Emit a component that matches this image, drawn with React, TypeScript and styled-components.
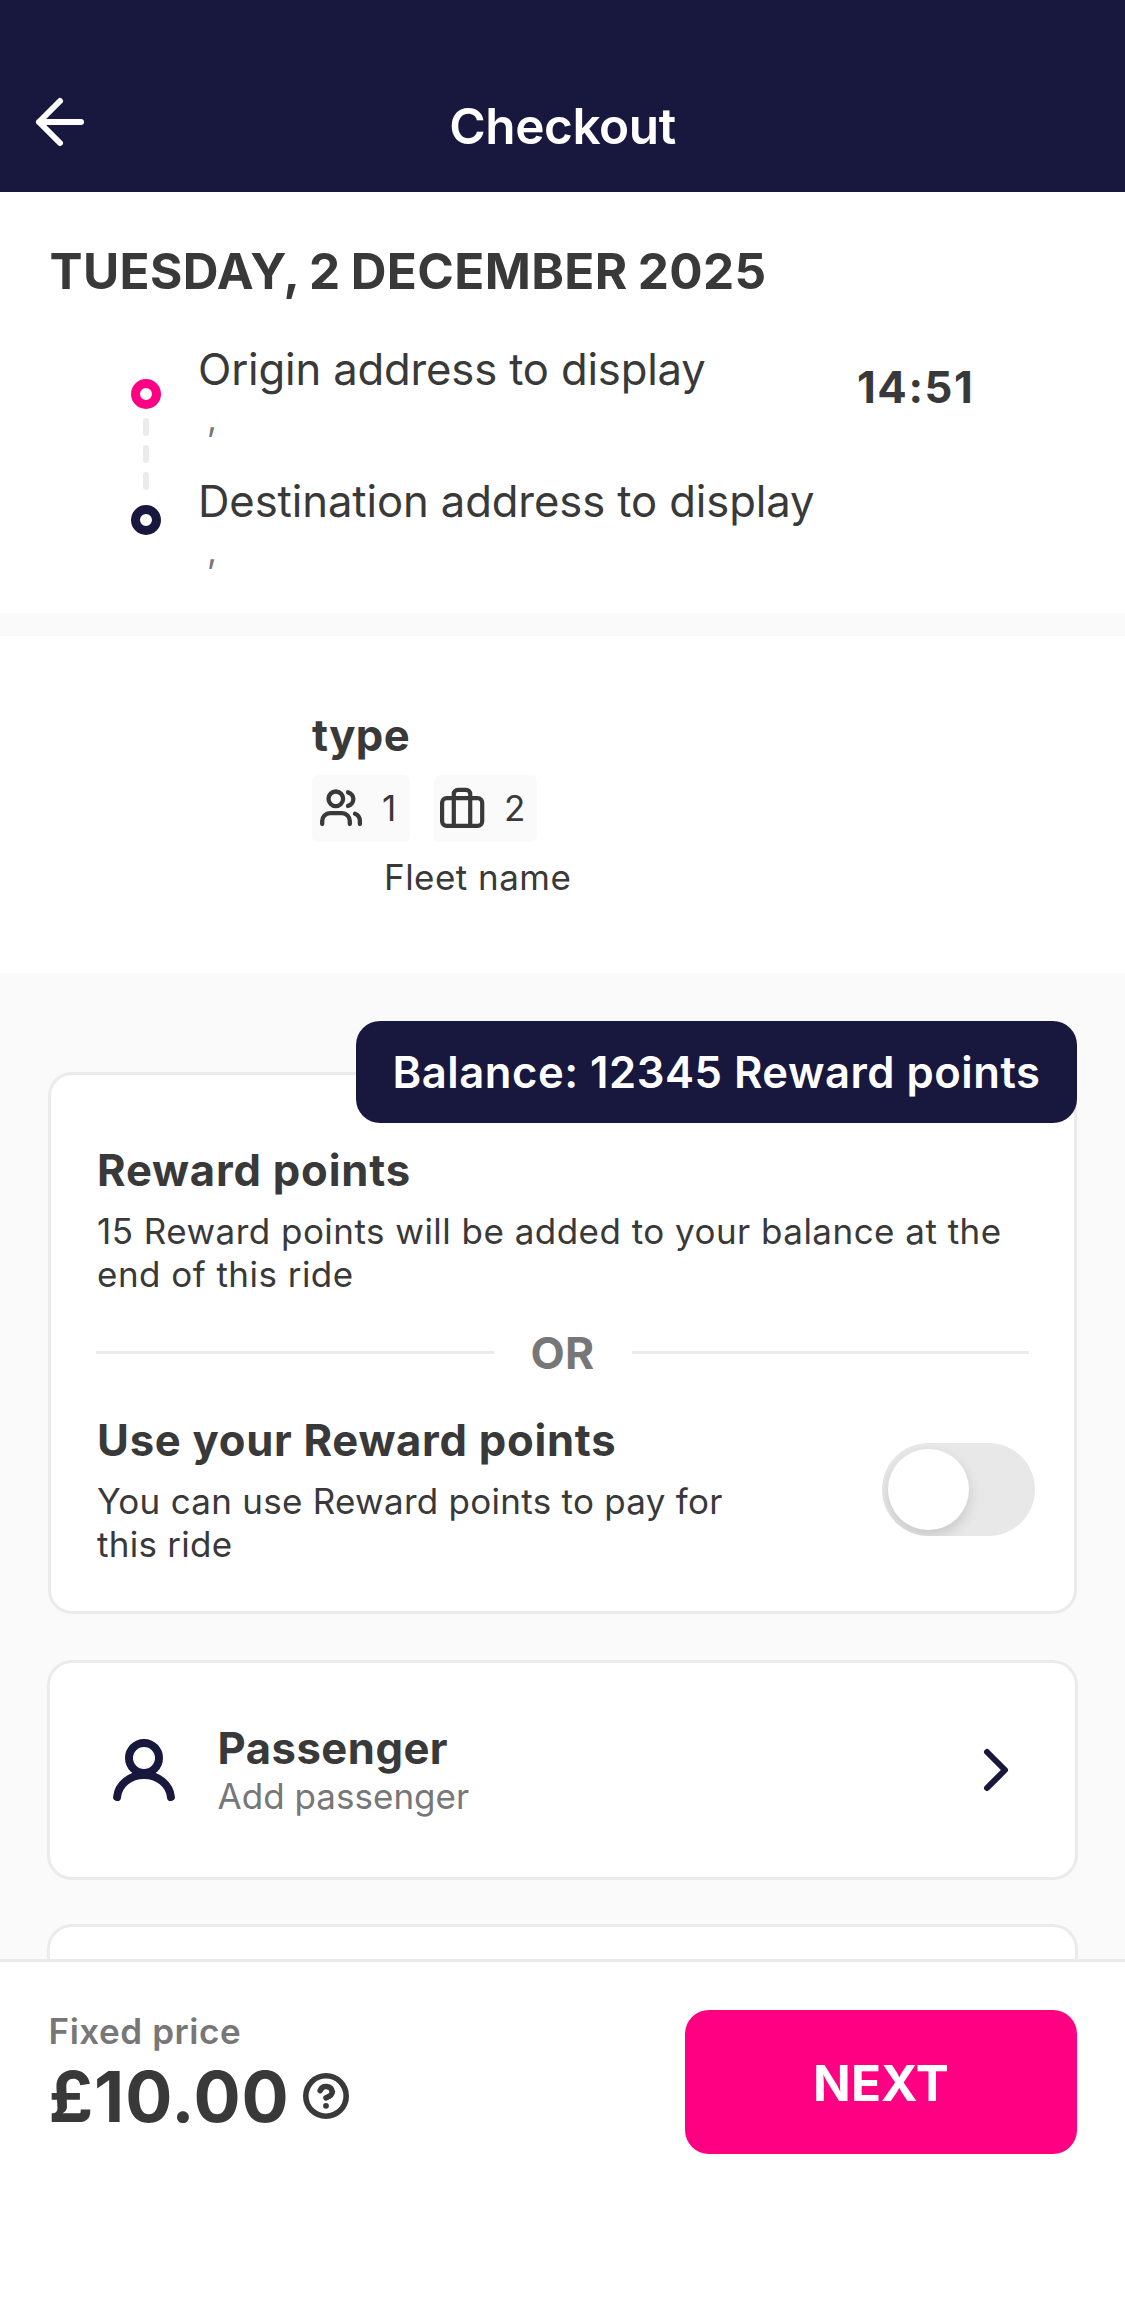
import React from "react";
import styled, { createGlobalStyle } from "styled-components";

const color = {
  navy: "#18173d",
  pink: "#ff0083",
  text: "#393939",
  muted: "#777777",
  line: "#ebebeb",
  surface: "#fafafa",
  white: "#ffffff",
};

const GlobalStyle = createGlobalStyle`
  * { box-sizing: border-box; }
  body {
    margin: 0;
    background: ${color.white};
    font-family: Inter, "Liberation Sans", sans-serif;
    color: ${color.text};
  }
  svg { display: block; flex: none; }
`;

const Screen = styled.div`
  display: flex;
  flex-direction: column;
  width: 1125px;
  height: 2304px;
  overflow: hidden;
`;

/* Header */

const Header = styled.header`
  display: grid;
  grid-template-columns: 60px 1fr 60px;
  align-items: center;
  flex: none;
  height: 192px;
  padding: 60px 30px 0;
  background: ${color.navy};
  color: ${color.white};
`;

const BackButton = styled.button`
  display: flex;
  margin: 0 0 8px;
  padding: 0;
  border: 0;
  background: none;
  color: inherit;
`;

const ScreenTitle = styled.h1`
  margin: 0;
  font-size: 49.5px;
  font-weight: 600;
  line-height: 60px;
  letter-spacing: -0.415px;
  text-align: center;
`;

/* Shared text */

const Title = styled.h2<{ $tracking?: number }>`
  margin: 0;
  font-size: 43.6px;
  font-weight: 700;
  line-height: 54px;
  letter-spacing: ${(p) => p.$tracking ?? 0.75}px;
`;

const Description = styled.p<{ $tracking?: number; $width?: number }>`
  margin: 12px 0 0;
  max-width: ${(p) => (p.$width ? `${p.$width}px` : "none")};
  font-size: 35px;
  line-height: 43px;
  letter-spacing: ${(p) => p.$tracking ?? 0.47}px;
`;

/* Trip */

const Scroll = styled.main`
  flex: 1;
  min-height: 0;
  overflow: hidden;
  background: ${color.surface};
`;

const TripSection = styled.section`
  height: 421px;
  padding-top: 49px;
  background: ${color.white};
`;

const TripDate = styled.h2`
  margin: 0 0 0 49.5px;
  font-size: 49.5px;
  font-weight: 700;
  line-height: 60px;
  letter-spacing: 0.37px;
  word-spacing: -2px;
`;

const Trip = styled.div`
  display: grid;
  grid-template-columns: 30px 622px auto;
  column-gap: 37px;
  align-items: start;
  padding: 42px 0 0 131px;
`;

const Route = styled.div`
  display: flex;
  flex-direction: column;
  align-items: center;
  gap: 9px;
  padding-top: 36px;
`;

const Stop = styled.span<{ $color: string; $end?: boolean }>`
  width: 30px;
  height: 30px;
  margin-top: ${(p) => (p.$end ? 6 : 0)}px;
  border: 9px solid ${(p) => p.$color};
  border-radius: 50%;
`;

const Dash = styled.span`
  width: 6px;
  height: 18px;
  border-radius: 3px;
  background: ${color.line};
`;

const Addresses = styled.div`
  display: flex;
  flex-direction: column;
  gap: 32px;
`;

const AddressLine = styled.div<{ $tracking: number }>`
  font-size: 43.6px;
  line-height: 54px;
  letter-spacing: ${(p) => p.$tracking}px;
  white-space: nowrap;
`;

const AddressDetail = styled.div`
  padding: 0 0 4px 9px;
  font-size: 35px;
  line-height: 42px;
  color: ${color.muted};
`;

const Time = styled.div`
  font-size: 43.6px;
  font-weight: 700;
  line-height: 54px;
  letter-spacing: 1.57px;
  padding-top: 18px;
`;

/* Vehicle */

const VehicleSection = styled.section`
  height: 337px;
  margin-top: 23px;
  padding: 73px 0 0 312px;
  background: ${color.white};
`;

const Chips = styled.div`
  display: flex;
  gap: 24px;
  margin-top: 12px;
`;

const Chip = styled.div<{ $width: number }>`
  display: flex;
  align-items: center;
  gap: 17px;
  width: ${(p) => p.$width}px;
  height: 67px;
  padding: 0 0 1px 5px;
  border-radius: 6px;
  background: ${color.surface};
  font-size: 35px;
  line-height: 44px;
`;

const FleetName = styled.div`
  margin: 13px 0 0 72px;
  font-size: 35px;
  line-height: 44px;
  letter-spacing: 0.474px;
`;

/* Cards */

const Cards = styled.div`
  display: flex;
  flex-direction: column;
  gap: 44px;
  padding: 99px 47px 0;
`;

const RewardCard = styled.section`
  position: relative;
  height: 542px;
  margin: 0 1px 2px;
  padding: 69px 45px 0;
  border: 3px solid ${color.line};
  border-radius: 24px;
  background: ${color.white};
`;

const BalanceBadge = styled.div`
  position: absolute;
  top: -54px;
  right: -3px;
  display: flex;
  align-items: center;
  justify-content: center;
  width: 721px;
  height: 102px;
  border-radius: 24px;
  background: ${color.navy};
  color: ${color.white};
  font-size: 43.6px;
  font-weight: 600;
  letter-spacing: 0.51px;
  white-space: nowrap;
`;

const RewardText = styled.div`
  padding-left: 1px;
`;

const OrDivider = styled.div`
  display: grid;
  grid-template-columns: 1fr 138px 1fr;
  align-items: center;
  margin: 30px 0 34px;
`;

const Rule = styled.span`
  height: 3px;
  margin-bottom: 1px;
  background: ${color.line};
`;

const OrLabel = styled.span`
  font-size: 44.4px;
  font-weight: 700;
  line-height: 54px;
  letter-spacing: 0.4px;
  text-align: center;
  color: ${color.muted};
`;

const RedeemRow = styled.div`
  display: flex;
  align-items: center;
  justify-content: space-between;
  margin-right: -6px;
`;

const Toggle = styled.button`
  display: flex;
  flex: none;
  width: 153px;
  height: 93px;
  margin: 0 0 1px;
  padding: 6px;
  border: 0;
  border-radius: 47px;
  overflow: hidden;
  background: #e8e8e8;
`;

const Knob = styled.span`
  width: 81px;
  height: 81px;
  border-radius: 50%;
  background: ${color.white};
  box-shadow: 0 6px 14px rgba(0, 0, 0, 0.14);
`;

const OptionCard = styled.section`
  display: flex;
  align-items: center;
  height: 220px;
  padding: 0 55px 0 58px;
  border: 3px solid ${color.line};
  border-radius: 25px;
  background: ${color.white};
  color: ${color.navy};
`;

const OptionText = styled.div`
  flex: 1;
  margin-left: 37.5px;
  padding-bottom: 2px;
  color: ${color.text};
`;

const OptionHint = styled.div`
  font-size: 35px;
  line-height: 41px;
  letter-spacing: 0.03px;
  color: ${color.muted};
`;

/* Footer */

const Footer = styled.footer`
  display: flex;
  align-items: flex-start;
  justify-content: space-between;
  flex: none;
  height: 345px;
  padding: 48px 48px 0 48.5px;
  border-top: 3px solid #e9e9e9;
  background: ${color.white};
`;

const PriceLabel = styled.div`
  font-size: 35px;
  font-weight: 600;
  line-height: 42px;
  letter-spacing: 0.56px;
  color: ${color.muted};
`;

const PriceRow = styled.div`
  display: flex;
  align-items: center;
  gap: 12px;
  margin-top: 2px;

  svg {
    margin-bottom: 2px;
  }
`;

const Price = styled.span`
  font-size: 70px;
  font-weight: 700;
  line-height: 85px;
  letter-spacing: 0.886px;
`;

const NextButton = styled.button`
  width: 392px;
  height: 144px;
  padding: 2px 0 0;
  border: 0;
  border-radius: 24px;
  background: ${color.pink};
  color: ${color.white};
  font: 700 49.5px Inter, "Liberation Sans", sans-serif;
  letter-spacing: 0.1px;
`;

/* Icons */

const stroke = {
  fill: "none",
  stroke: "currentColor",
  strokeLinecap: "round" as const,
  strokeLinejoin: "round" as const,
};

const ArrowIcon = () => (
  <svg width="60" height="60" viewBox="0 0 60 60" {...stroke} strokeWidth="6">
    <path d="M30 9 9 30l21 21M9 30h42" />
  </svg>
);

const PeopleIcon = () => (
  <svg width="48" height="44" viewBox="0 0 48 44" {...stroke} strokeWidth="4.3">
    <circle cx="18.8" cy="12.8" r="7.3" />
    <path d="M5.2 38v-3a7.8 7.8 0 0 1 7.8-7.8h12a7.8 7.8 0 0 1 7.8 7.8v3" />
    <path d="M31 6.3a7 7 0 0 1 0 13.6" />
    <path d="M38 27.7a7.8 7.8 0 0 1 4.9 7.3v3" />
  </svg>
);

const LuggageIcon = () => (
  <svg width="48" height="44" viewBox="0 0 48 44" {...stroke} strokeWidth="4.2">
    <rect x="3.1" y="12.1" width="40.1" height="27.8" rx="4.6" />
    <path d="M14.8 39.9V8a4.2 4.2 0 0 1 4.2-4.2h8A4.2 4.2 0 0 1 31.2 8v31.9" />
  </svg>
);

const PersonIcon = () => (
  <svg width="72" height="72" viewBox="0 0 72 72" {...stroke} strokeWidth="8">
    <circle cx="36" cy="24" r="15" />
    <path d="M9.1 63A27 24.2 0 0 1 62.900 63" />
  </svg>
);

const ChevronIcon = () => (
  <svg width="48" height="48" viewBox="0 0 48 48" {...stroke} strokeWidth="6">
    <path d="m15 6 18 18-18 18" />
  </svg>
);

const HelpIcon = () => (
  <svg width="48" height="48" viewBox="0 0 48 48" {...stroke} strokeWidth="5.6">
    <circle cx="24" cy="24" r="20.2" />
    <path d="M18.2 18.6A6.3 6.3 0 0 1 30.3 19.8C30.3 23.5 24 25.8 24 25.8" />
    <circle cx="24" cy="33.8" r="2.9" fill="currentColor" stroke="none" />
  </svg>
);

export default function App() {
  return (
    <Screen>
      <GlobalStyle />
      <Header>
        <BackButton aria-label="Back">
          <ArrowIcon />
        </BackButton>
        <ScreenTitle>Checkout</ScreenTitle>
      </Header>

      <Scroll>
        <TripSection>
          <TripDate>TUESDAY, 2 DECEMBER 2025</TripDate>
          <Trip>
            <Route>
              <Stop $color={color.pink} />
              <Dash />
              <Dash />
              <Dash />
              <Stop $color={color.navy} $end />
            </Route>
            <Addresses>
              <div>
                <AddressLine $tracking={-0.16}>Origin address to display</AddressLine>
                <AddressDetail>,</AddressDetail>
              </div>
              <div>
                <AddressLine $tracking={-0.095}>Destination address to display</AddressLine>
                <AddressDetail>,</AddressDetail>
              </div>
            </Addresses>
            <Time>14:51</Time>
          </Trip>
        </TripSection>

        <VehicleSection>
          <Title $tracking={0.35}>type</Title>
          <Chips>
            <Chip $width={98}>
              <PeopleIcon />1
            </Chip>
            <Chip $width={103}>
              <LuggageIcon />2
            </Chip>
          </Chips>
          <FleetName>Fleet name</FleetName>
        </VehicleSection>

        <Cards>
          <RewardCard>
            <BalanceBadge>Balance: 12345 Reward points</BalanceBadge>
            <RewardText>
              <Title $tracking={0.8}>Reward points</Title>
              <Description>
                15 Reward points will be added to your balance at the end of this ride
              </Description>
            </RewardText>
            <OrDivider>
              <Rule />
              <OrLabel>OR</OrLabel>
              <Rule />
            </OrDivider>
            <RedeemRow>
              <RewardText>
                <Title $tracking={0.72}>Use your Reward points</Title>
                <Description $tracking={0.27} $width={660}>
                  You can use Reward points to pay for this ride
                </Description>
              </RewardText>
              <Toggle role="switch" aria-checked="false">
                <Knob />
              </Toggle>
            </RedeemRow>
          </RewardCard>

          <OptionCard>
            <PersonIcon />
            <OptionText>
              <Title $tracking={0.49}>Passenger</Title>
              <OptionHint>Add passenger</OptionHint>
            </OptionText>
            <ChevronIcon />
          </OptionCard>

          <OptionCard />
        </Cards>
      </Scroll>

      <Footer>
        <div>
          <PriceLabel>Fixed price</PriceLabel>
          <PriceRow>
            <Price>£10.00</Price>
            <HelpIcon />
          </PriceRow>
        </div>
        <NextButton>NEXT</NextButton>
      </Footer>
    </Screen>
  );
}
